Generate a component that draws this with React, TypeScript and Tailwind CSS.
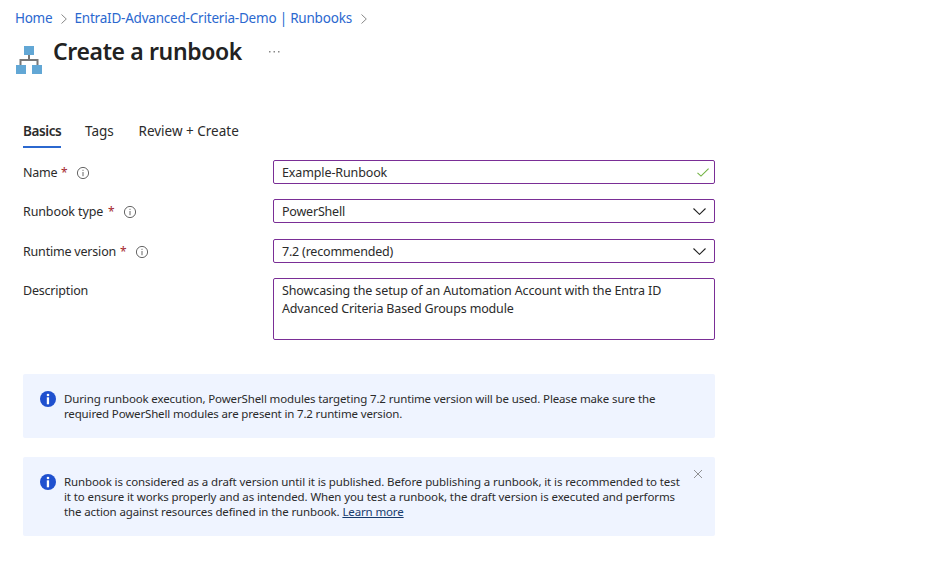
import type { ReactNode } from "react";

function Crumb({ children, className }: { children: ReactNode; className: string }) {
  return (
    <>
      <a className={`whitespace-nowrap text-[13.5px] leading-5 text-[#2b68cf] ${className}`}>{children}</a>
      <svg className="mt-px mr-[8px] ml-[9px] h-3 w-[6px]" viewBox="0 0 6 12" fill="none" stroke="#888" strokeWidth="1">
        <path d="M.5 1.5 5.3 6 .5 10.5" />
      </svg>
    </>
  );
}

function InfoOutline() {
  return (
    <svg className="mt-px h-3 w-3 overflow-visible" viewBox="0 0 12 12" fill="none" stroke="#555" strokeWidth=".9">
      <circle cx="6" cy="6" r="5.6" />
      <path d="M6 5v4.2M6 2.8v1.1" />
    </svg>
  );
}

function InfoSolid() {
  return (
    <svg className="h-4 w-4 shrink-0" viewBox="0 0 16 16">
      <circle cx="8" cy="8" r="8" fill="#1f50cf" />
      <circle cx="8" cy="4" r="1.3" fill="#fff" />
      <path d="M6.8 6.3h2.3v7H6.8z" fill="#fff" />
    </svg>
  );
}

function Chevron() {
  return (
    <svg className="h-[7px] w-[13px]" viewBox="0 0 13 7" fill="none" stroke="#222" strokeWidth="1.1">
      <path d="M.5.5 6.5 6.3 12.5.5" />
    </svg>
  );
}

function Field({ label, labelWidth = "", required, children, className }: {
  label: string;
  labelWidth?: string;
  required?: boolean;
  children: ReactNode;
  className: string;
}) {
  return (
    <div className={`flex items-start ${className}`}>
      <div className="flex h-6 w-[250px] items-center">
        <span className={`pt-[2px] whitespace-nowrap ${labelWidth}`}>{label}</span>
        {required && (
          <>
            <span className="mr-[10px] ml-[4px] w-[6px] pt-px text-[12px] text-[#a4262c]">*</span>
            <InfoOutline />
          </>
        )}
      </div>
      {children}
    </div>
  );
}

const box = "w-[442px] rounded-[2px] border border-[#7a2e96] bg-white pl-2 text-[#2b2b2b]";

export default function App() {
  return (
    <div className="h-[588px] w-[944px] overflow-hidden bg-white font-['Noto_Sans','Open_Sans',sans-serif] text-[12.5px] tracking-[-0.12px] text-[#2b2b2b]">
      <nav className="flex h-7 items-center pt-2 pl-[15px]">
        <Crumb className="w-[36.5px] tracking-[-0.3px]">Home</Crumb>
        <Crumb className="w-[277px] tracking-[-0.21px]">EntraID-Advanced-Criteria-Demo | Runbooks</Crumb>
      </nav>
      <header className="mt-3 flex h-[70px] items-start pl-4">
        <svg className="mt-[6px] h-7 w-[26px]" viewBox="0 0 26 28">
          <path d="M13 8v6M4.5 20v-6h17v6" fill="none" stroke="#777" strokeWidth="2" />
          <path d="M8 0h10v9H8zM0 19h10v9H0zM16 19h10v9H16z" fill="#62a7d5" />
        </svg>
        <h1 className="-mt-px ml-[11px] h-6 w-[189px] text-[23px] leading-6 font-semibold tracking-[-0.37px] whitespace-nowrap text-[#222]">Create a runbook</h1>
        <svg className="mt-[11px] ml-[27px] h-[2px] w-[11px]" viewBox="0 0 11 2" fill="#888">
          <path d="M0 0h1.5v1.5H0zM4.5 0H6v1.5H4.5zM9 0h1.5v1.5H9z" />
        </svg>
      </header>
      <main className="pt-[10px] pl-[23px]">
        <div className="flex h-7 gap-6 text-[13.5px] leading-[23px] tracking-[0px] whitespace-nowrap">
          <div className="h-7 w-[38px] border-b-2 border-[#2b68cf] font-semibold tracking-[-0.4px]">Basics</div>
          <div className="w-[29.5px]">Tags</div>
          <div>Review + Create</div>
        </div>
        <Field label="Name" labelWidth="w-[34px] tracking-[-0.25px]" required className="mt-3">
          <div className={`${box} flex h-6 items-center justify-between pr-[5px]`}>
            <span className="pt-[2px]">Example-Runbook</span>
            <svg className="h-[9px] w-3" viewBox="0 0 12 9" fill="none" stroke="#72b343" strokeWidth="1.1">
              <path d="M.5 4.8 4 8.1 11.6.6" />
            </svg>
          </div>
        </Field>
        <Field label="Runbook type" labelWidth="w-[81px]" required className="mt-[15px]">
          <div className={`${box} flex h-6 items-center justify-between pr-2`}>
            <span className="pt-[2px] tracking-[-0.2px]">PowerShell</span>
            <Chevron />
          </div>
        </Field>
        <Field label="Runtime version" labelWidth="w-[93px] tracking-[-0.2px]" required className="mt-4">
          <div className={`${box} flex h-6 items-center justify-between pr-2`}>
            <span className="pt-[2px] tracking-[-0.2px]">7.2 (recommended)</span>
            <Chevron />
          </div>
        </Field>
        <Field label="Description" labelWidth="tracking-[-0.2px]" className="mt-[15px]">
          <div className={`${box} h-[62px] pt-[3px] leading-[18px] whitespace-nowrap`}>
            <p>Showcasing the setup of an Automation Account with the Entra ID</p>
            <p className="tracking-[-0.16px]">Advanced Criteria Based Groups module</p>
          </div>
        </Field>
        <section className="mt-[34px] flex h-16 w-[692px] rounded-[2px] bg-[#eff4ff] pt-[17px] pl-[17px] text-[11.5px] leading-[15px] tracking-[-0.14px]">
          <InfoSolid />
          <div className="ml-2 whitespace-nowrap">
            <p>During runbook execution, PowerShell modules targeting 7.2 runtime version will be used. Please make sure the</p>
            <p className="tracking-[-0.155px]">required PowerShell modules are present in 7.2 runtime version.</p>
          </div>
        </section>
        <section className="mt-[19px] flex h-[79px] w-[692px] rounded-[2px] bg-[#eff4ff] pt-[17px] pl-[17px] text-[11.5px] leading-[15px] tracking-[-0.11px]">
          <InfoSolid />
          <div className="ml-2 w-[630px] whitespace-nowrap">
            <p>Runbook is considered as a draft version until it is published. Before publishing a runbook, it is recommended to test</p>
            <p>it to ensure it works properly and as intended. When you test a runbook, the draft version is executed and performs</p>
            <p className="tracking-[-0.13px]">the action against resources defined in the runbook. <a className="text-[#173b6d] underline">Learn more</a></p>
          </div>
          <svg className="-mt-1 h-2 w-2 shrink-0" viewBox="0 0 8 8" fill="none" stroke="#777" strokeWidth=".8">
            <path d="m0 0 8 8M8 0 0 8" />
          </svg>
        </section>
      </main>
    </div>
  );
}
